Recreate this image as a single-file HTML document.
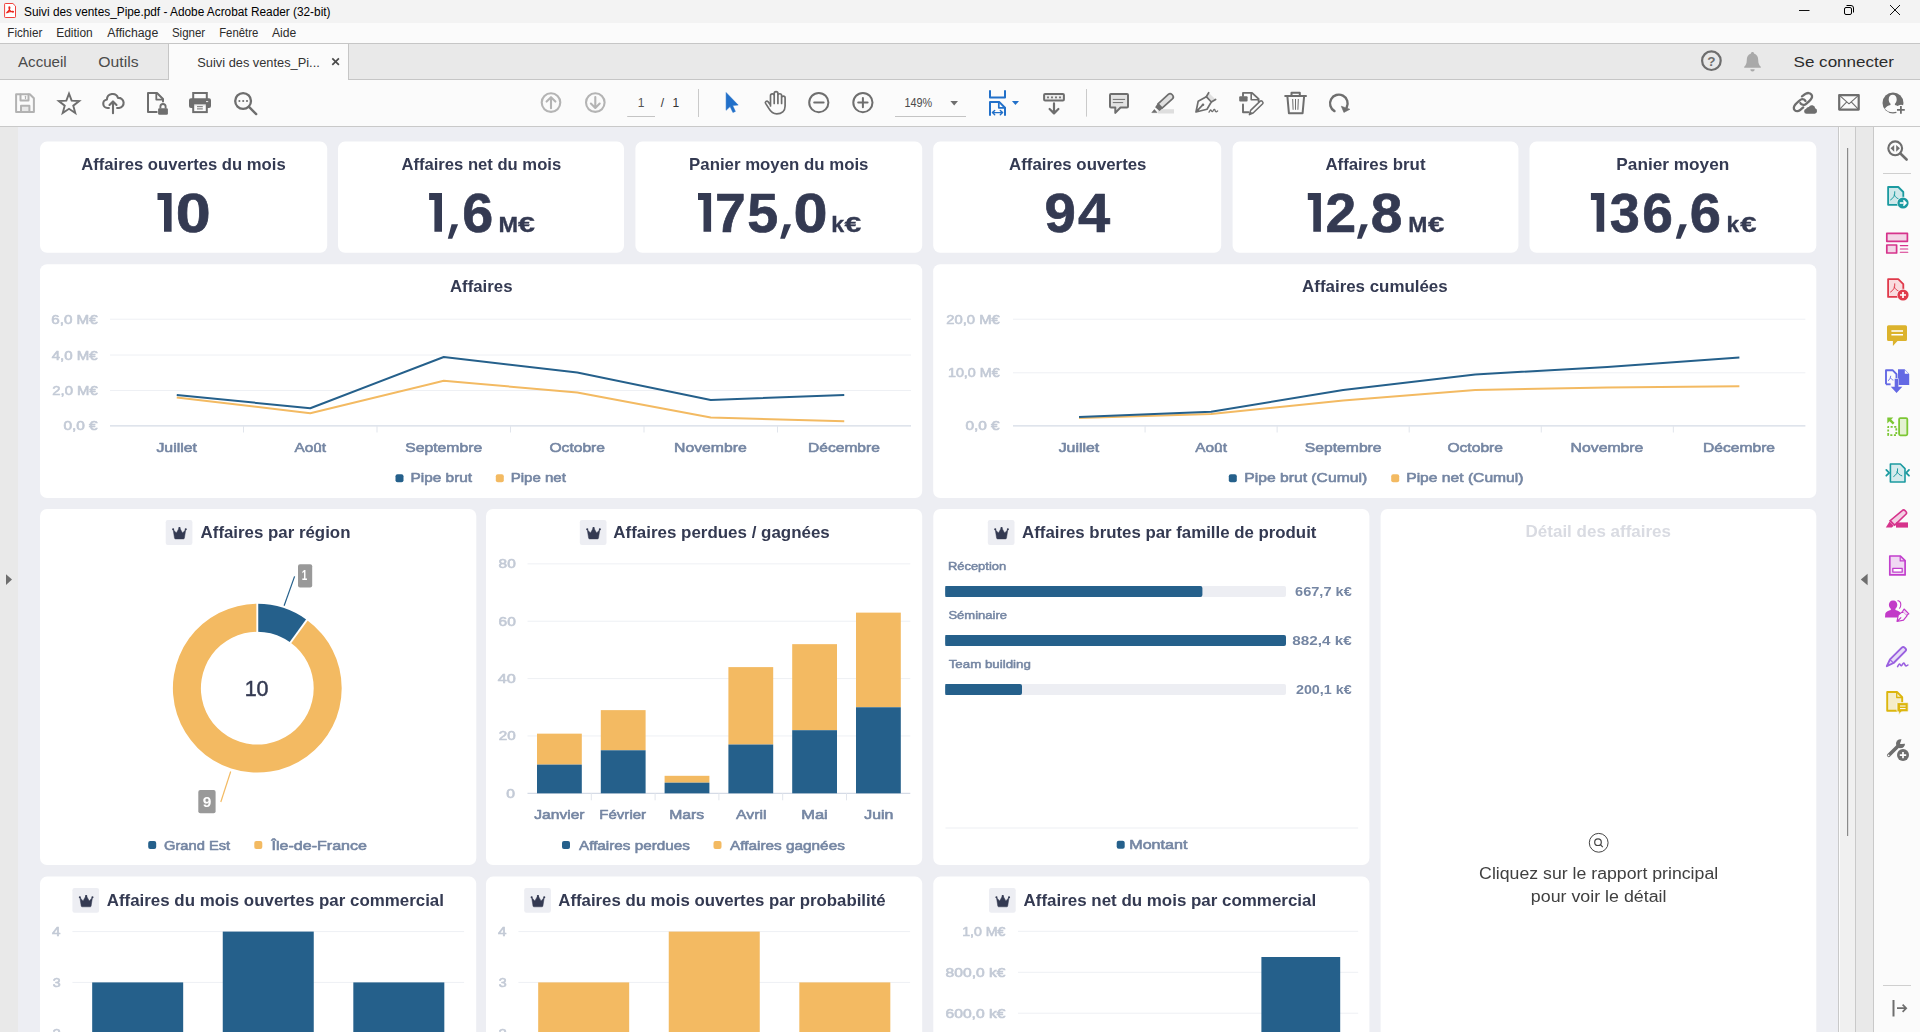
<!DOCTYPE html>
<html lang="fr"><head><meta charset="utf-8"><title>Suivi des ventes_Pipe.pdf - Adobe Acrobat Reader (32-bit)</title>
<style>
html,body{margin:0;padding:0;background:#fafafa;}
body{width:1920px;height:1032px;overflow:hidden;font-family:'Liberation Sans', sans-serif;}
svg{display:block;position:absolute;left:0;top:0;}
svg text{font-family:"Liberation Sans",sans-serif;white-space:pre;}
</style></head><body>
<svg id="chrome" width="1920" height="1032" viewBox="0 0 1920 1032">
<rect x="0.00" y="127.00" width="1920.00" height="905.00" fill="#edeef3"/>
<rect x="0.00" y="0.00" width="1920.00" height="23.00" fill="#f3f3f3"/>
<rect x="0.00" y="23.00" width="1920.00" height="20.00" fill="#fbfbfb"/>
<rect x="0.00" y="43.00" width="1920.00" height="37.00" fill="#e9e9e9"/>
<line x1="0.00" y1="43.50" x2="1920.00" y2="43.50" stroke="#c6c6c6" stroke-width="1"/>
<line x1="0.00" y1="79.50" x2="1920.00" y2="79.50" stroke="#c6c6c6" stroke-width="1"/>
<rect x="169.00" y="44.00" width="179.00" height="36.00" fill="#fbfbfb"/>
<line x1="168.50" y1="44.00" x2="168.50" y2="80.00" stroke="#c6c6c6" stroke-width="1"/>
<line x1="348.50" y1="44.00" x2="348.50" y2="80.00" stroke="#c6c6c6" stroke-width="1"/>
<rect x="0.00" y="80.00" width="1920.00" height="46.00" fill="#fbfbfb"/>
<line x1="0.00" y1="126.50" x2="1920.00" y2="126.50" stroke="#c9c9c9" stroke-width="1"/>
<g fill="none" stroke="#f0403a" stroke-width="1"><path d="M5.300 3.500h7.600l2.600 2.600v10.700a.7.7 0 0 1-.7.700h-9.500a.7.7 0 0 1-.7-.700v-12.600a.7.7 0 0 1 .7-.700z" fill="#fff"/><path d="M6.300 12.900c1.900-.9 3.300-3 3.600-5.300.1-1-1-1-1 0 0 1.900 1.700 4 3.900 4.500 1 .2 1-.9 0-.8-2.100.2-4.500.8-6.500 1.600z" stroke="#e8281f" stroke-width="1.100"/></g>
<text x="24.00" y="15.60" font-size="12" fill="#000" font-weight="normal" text-anchor="start" textLength="306.50" lengthAdjust="spacingAndGlyphs">Suivi des ventes_Pipe.pdf - Adobe Acrobat Reader (32-bit)</text>
<line x1="1799.00" y1="10.50" x2="1809.50" y2="10.50" stroke="#111" stroke-width="1"/>
<g fill="none" stroke="#000" stroke-width="1"><rect x="1844.500" y="7.500" width="7" height="7" rx="1.500"/><path d="M1846.500 5.500h4.500a2.500 2.500 0 0 1 2.500 2.500v4.500"/></g>
<path d="M1890 5l10 10M1900 5l-10 10" stroke="#111" stroke-width="1" fill="none"/>
<text x="7.30" y="37.00" font-size="12" fill="#2c2c2c" font-weight="normal" text-anchor="start" textLength="35.00" lengthAdjust="spacingAndGlyphs">Fichier</text>
<text x="56.20" y="37.00" font-size="12" fill="#2c2c2c" font-weight="normal" text-anchor="start" textLength="36.50" lengthAdjust="spacingAndGlyphs">Edition</text>
<text x="107.30" y="37.00" font-size="12" fill="#2c2c2c" font-weight="normal" text-anchor="start" textLength="51.00" lengthAdjust="spacingAndGlyphs">Affichage</text>
<text x="171.90" y="37.00" font-size="12" fill="#2c2c2c" font-weight="normal" text-anchor="start" textLength="33.30" lengthAdjust="spacingAndGlyphs">Signer</text>
<text x="219.20" y="37.00" font-size="12" fill="#2c2c2c" font-weight="normal" text-anchor="start" textLength="39.10" lengthAdjust="spacingAndGlyphs">Fenêtre</text>
<text x="271.90" y="37.00" font-size="12" fill="#2c2c2c" font-weight="normal" text-anchor="start" textLength="24.30" lengthAdjust="spacingAndGlyphs">Aide</text>
<text x="18.00" y="66.70" font-size="15" fill="#4b4b4b" font-weight="normal" text-anchor="start" textLength="48.70" lengthAdjust="spacingAndGlyphs">Accueil</text>
<text x="98.30" y="66.70" font-size="15" fill="#4b4b4b" font-weight="normal" text-anchor="start" textLength="40.20" lengthAdjust="spacingAndGlyphs">Outils</text>
<text x="197.30" y="67.00" font-size="13.5" fill="#333" font-weight="normal" text-anchor="start" textLength="122.50" lengthAdjust="spacingAndGlyphs">Suivi des ventes_Pi...</text>
<path d="M332.300 58.300l6.600 6.600M338.900 58.300l-6.600 6.600" stroke="#4b4b4b" stroke-width="1.700" fill="none"/>
<circle cx="1711.4" cy="60.7" r="9.300" fill="none" stroke="#6e6e6e" stroke-width="2.200"/>
<text x="1711.40" y="65.60" font-size="13.5" fill="#6e6e6e" font-weight="bold" text-anchor="middle">?</text>
<path d="M1752.500 52c-.9 0-1.500.6-1.500 1.400-3 .9-4.200 3.400-4.200 6.600 0 3.600-1.200 5.400-2.600 6.800v1h16.600v-1c-1.400-1.400-2.600-3.200-2.600-6.800 0-3.200-1.200-5.700-4.200-6.600 0-.8-.6-1.400-1.500-1.400zM1750.300 69.200a2.200 2.200 0 0 0 4.400 0z" fill="#a9a9a9"/>
<text x="1793.50" y="66.60" font-size="15" fill="#2c2c2c" font-weight="normal" text-anchor="start" textLength="100.50" lengthAdjust="spacingAndGlyphs">Se connecter</text>
<g fill="none" stroke="#b2b2b2" stroke-width="2" stroke-linejoin="round" stroke-linecap="round" stroke-linejoin="miter"><path d="M16.100 94.200h13.700l4.100 4.100v13.600h-17.800z"/><path d="M20.500 94.500v5.900h8v-5.900" /><path d="M25.500 96.300v2.300" stroke-width="1.200"/><rect x="21" y="105.700" width="8.400" height="6.200" fill="#e8e8e8"/></g>
<polygon points="69.00,93.60 71.65,100.66 79.18,100.99 73.28,105.69 75.29,112.96 69.00,108.80 62.71,112.96 64.72,105.69 58.82,100.99 66.35,100.66" fill="none" stroke="#6e6e6e" stroke-width="1.900" stroke-linejoin="miter"/>
<g fill="none" stroke="#6e6e6e" stroke-width="2.1" stroke-linejoin="round" stroke-linecap="round"><path d="M108.900 108h-1.400a4.300 4.300 0 0 1-.6-8.550 5.700 5.700 0 0 1 11.100-1.550 4.800 4.800 0 0 1 1.100 10.100h-2"/><path d="M113 113.300v-11.500M109.500 105l3.500-3.600 3.500 3.600"/></g>
<g fill="none" stroke="#6e6e6e" stroke-width="2" stroke-linejoin="round" stroke-linecap="round" stroke-linejoin="miter" stroke-linecap="butt"><path d="M156.700 112h-8.700v-19h9l6 6v2.600"/><path d="M156.300 93.300v6.300h6.300" stroke-width="1.800"/></g>
<rect x="158.100" y="108.300" width="9.800" height="6.500" rx="1.300" fill="#6e6e6e"/><path d="M160.400 108.500v-1.900a2.600 2.600 0 0 1 5.200 0v1.900" fill="none" stroke="#6e6e6e" stroke-width="1.900"/>
<path d="M193.200 99v-6h13.600v6" fill="none" stroke="#6e6e6e" stroke-width="2"/><rect x="189" y="98.200" width="22" height="9.800" rx="2" fill="#6e6e6e"/><rect x="206" y="101" width="2.200" height="1.100" fill="#e0e0e0"/><rect x="193.200" y="104.100" width="13.600" height="8" fill="#fbfbfb" stroke="#6e6e6e" stroke-width="2"/><path d="M197 106.700h5.800M197 108.900h5.800" stroke="#6e6e6e" stroke-width="1" fill="none"/><path d="M194.200 104.600h11.600" stroke="#ddd" stroke-width=".8"/>
<g fill="none" stroke="#6e6e6e" stroke-width="2.3" stroke-linejoin="round" stroke-linecap="round"><circle cx="243.100" cy="101" r="7.900"/><path d="M249 106.900l7.200 7.200" stroke-width="2.400"/></g>
<g fill="#6e6e6e" stroke="none" stroke-width="1.8" stroke-linejoin="round" stroke-linecap="round"><circle cx="239.400" cy="101" r="1.050"/><circle cx="243.200" cy="101" r="1.050"/><circle cx="247" cy="101" r="1.050"/></g>
<g fill="none" stroke="#b4b4b4" stroke-width="2.1" stroke-linejoin="round" stroke-linecap="round"><circle cx="551" cy="102.600" r="9.300"/><path d="M551 108.200v-10.800M546.600 101.600l4.400-4.400 4.400 4.400"/></g>
<g fill="none" stroke="#b4b4b4" stroke-width="2.1" stroke-linejoin="round" stroke-linecap="round"><circle cx="595.300" cy="102.600" r="9.300"/><path d="M595.300 97v10.800M590.900 103.600l4.400 4.400 4.400-4.400"/></g>
<text x="641.20" y="107.00" font-size="12" fill="#555" font-weight="normal" text-anchor="middle">1</text>
<line x1="627.20" y1="116.50" x2="655.00" y2="116.50" stroke="#c4c4c4" stroke-width="1"/>
<text x="660.70" y="107.00" font-size="12" fill="#333" font-weight="normal" text-anchor="start">/</text>
<text x="672.50" y="107.00" font-size="12" fill="#333" font-weight="normal" text-anchor="start">1</text>
<line x1="698.50" y1="89.00" x2="698.50" y2="117.00" stroke="#cacaca" stroke-width="1"/>
<path d="M726.100 92.500v17.800l4-3.700 2.800 5.900 2.500-1.100-2.700-5.900 5.500-.4z" fill="#2270c9" stroke="#2270c9" stroke-width=".5" stroke-linejoin="round"/>
<g fill="none" stroke="#6e6e6e" stroke-width="1.7" stroke-linejoin="round" stroke-linecap="round"><path d="M770.500 106v-10.300a1.850 1.850 0 0 1 3.700 0v7.800M774.200 95.800v-2.300a1.850 1.850 0 0 1 3.700 0v10M777.900 95.600a1.850 1.850 0 0 1 3.700 0v7.900M781.600 97.900a1.750 1.750 0 0 1 3.500 0v8.100c0 4.900-3.400 7.900-8.300 7.900-4 0-6-2-8-5.500l-3.200-5c-1-1.700 1.300-3.100 2.500-1.700l2.400 3.300"/></g>
<g fill="none" stroke="#6e6e6e" stroke-width="2" stroke-linejoin="round" stroke-linecap="round" stroke-linecap="butt"><circle cx="818.800" cy="102.600" r="9.600"/><path d="M814.200 102.600h9.400"/></g>
<g fill="none" stroke="#6e6e6e" stroke-width="2" stroke-linejoin="round" stroke-linecap="round" stroke-linecap="butt"><circle cx="862.900" cy="102.600" r="9.600"/><path d="M858.200 102.600h9.400M862.900 97.900v9.400"/></g>
<text x="904.50" y="107.00" font-size="12" fill="#4a4a4a" font-weight="normal" text-anchor="start" textLength="27.70" lengthAdjust="spacingAndGlyphs">149%</text>
<path d="M950.400 100.900h7.600l-3.800 4.600z" fill="#6e6e6e"/>
<line x1="895.00" y1="116.50" x2="966.00" y2="116.50" stroke="#c4c4c4" stroke-width="1"/>
<g fill="none" stroke="#2270c9" stroke-width="2" stroke-linejoin="round" stroke-linecap="round" stroke-linecap="butt" stroke-linejoin="miter"><path d="M990 91v6.500h15v-6.500"/><path d="M990 115v-12.900h9.400l5.600 5.600v7.300"/><path d="M998.800 102.300v5.500h5.900" stroke-width="1.700"/><path d="M992.600 112.600h9.800M994.700 110.400l-2.300 2.200 2.300 2.200M1000.300 110.400l2.300 2.200-2.300 2.200" stroke-width="1.400"/></g>
<path d="M1011.900 100.900h7.100l-3.550 4.200z" fill="#2270c9"/>
<g fill="none" stroke="#6e6e6e" stroke-width="2" stroke-linejoin="round" stroke-linecap="round"><rect x="1044.100" y="94" width="19.800" height="6.600" rx="1" fill="#ececec"/><path d="M1054 103.400v9.800M1049.600 109l4.400 4.400 4.400-4.400" stroke-width="2.200"/></g>
<g fill="#6e6e6e" stroke="none" stroke-width="1.8" stroke-linejoin="round" stroke-linecap="round"><rect x="1047.100" y="96.500" width="1.800" height="1.800"/><rect x="1051.100" y="96.500" width="1.800" height="1.800"/><rect x="1055.100" y="96.500" width="1.800" height="1.800"/><rect x="1059.100" y="96.500" width="1.800" height="1.800"/></g>
<line x1="1086.50" y1="89.00" x2="1086.50" y2="116.60" stroke="#cacaca" stroke-width="1"/>
<g fill="none" stroke="#6e6e6e" stroke-width="2" stroke-linejoin="round" stroke-linecap="round"><path d="M1111 94h16a1 1 0 0 1 1 1v11.500a1 1 0 0 1-1 1h-6.500l-5.200 5.400v-5.400h-4.300a1 1 0 0 1-1-1v-11.500a1 1 0 0 1 1-1z" fill="#e3e3e3"/><path d="M1113.200 99.400h11.500M1113.200 102.600h9.600" stroke-width="1"/></g>
<rect x="1157.80" y="109.20" width="16.20" height="4.30" fill="#dedede"/>
<path d="M1158 103.800l10.300-9.500a2.700 2.700 0 0 1 3.700.2l.6.700a2.700 2.700 0 0 1-.2 3.700l-10.300 9.300z" fill="#e0e0e0" stroke="#6e6e6e" stroke-width="1.700" stroke-linejoin="round"/><path d="M1157.700 103.500l4.700 5.100-2.800 2.300-4.500-3.600z" fill="#6e6e6e"/><path d="M1154.400 109.500l2.600 3.100h-5.200z" fill="#6e6e6e" stroke="#6e6e6e" stroke-width=".6" stroke-linejoin="round"/>
<path d="M1206.300 96.700l2.400-4 6.900 6.800-4.200 2.500z" fill="#e0e0e0"/>
<g fill="none" stroke="#6e6e6e" stroke-width="1.7" stroke-linejoin="round" stroke-linecap="round"><path d="M1196 112l2.200-10.800 8.100-4.500 5 5.300-4.300 7.200zM1196.300 111.700l6-6.300"/><path d="M1206.300 96.700l2.400-4M1211.300 102l4.300-2.600" /></g>
<circle cx="1203" cy="104.700" r="1.300" fill="#6e6e6e"/>
<g fill="none" stroke="#6e6e6e" stroke-width="1.8" stroke-linejoin="round" stroke-linecap="round"><path d="M1209 112.200c1.100-1.900 1.600-3 2.400-1.500s1.200 1.200 2-.4 1.400-.9 1.800.5 1.200 1.300 2.400.2" stroke-width="1.300"/></g>
<g fill="none" stroke="#6e6e6e" stroke-width="1.9" stroke-linejoin="round" stroke-linecap="round" stroke-linecap="butt" stroke-linejoin="miter"><path d="M1243 96v-3.100h9l6.600 6v2.300"/><path d="M1251.200 93.400v6.300h6.600" stroke-width="1.600"/><path d="M1243 104.400v7.900h5.600"/></g>
<rect x="1239.200" y="96.300" width="8.400" height="5.300" rx="1" fill="#6e6e6e"/>
<path d="M1249.400 114.600l1.200-4.200 9.600-9.300a1.200 1.200 0 0 1 1.700 0l.8.900a1.200 1.200 0 0 1 0 1.700l-9.600 9.300z" fill="#fbfbfb" stroke="#6e6e6e" stroke-width="1.500" stroke-linejoin="round"/><path d="M1249.400 114.600l1-3.400 2.400 2.400z" fill="#6e6e6e"/>
<g fill="none" stroke="#6e6e6e" stroke-width="2" stroke-linejoin="round" stroke-linecap="round" stroke-linecap="butt" stroke-linejoin="miter"><path d="M1285.200 96h20.800"/><path d="M1291.500 95.500v-2.800h8.300v2.800"/><path d="M1287.400 96.500l1.500 16.700h13.700l1.500-16.700"/></g>
<g fill="none" stroke="#6e6e6e" stroke-width="1" stroke-linejoin="round" stroke-linecap="round"><path d="M1292.700 99.400l.4 10M1295.500 99.400v10M1298.300 99.400l-.4 10"/></g>
<g fill="none" stroke="#6e6e6e" stroke-width="2.4" stroke-linejoin="round" stroke-linecap="round" stroke-linecap="butt"><path d="M1334.500 111.100a8.800 8.800 0 1 1 12.200-3.700"/></g>
<path d="M1341.300 106.200l8.600 3.100-6 3.100z" fill="#6e6e6e" stroke="#6e6e6e" stroke-width=".6" stroke-linejoin="round"/>
<path d="M1801.98 96.41C1802.59 95.98 1804.53 94.40 1805.64 93.83C1806.75 93.27 1807.67 92.91 1808.62 93.02C1809.57 93.13 1810.77 93.86 1811.34 94.51C1811.90 95.17 1812.15 96.10 1812.02 96.96C1811.88 97.81 1811.36 98.63 1810.52 99.67C1809.69 100.71 1808.04 102.31 1807.00 103.20C1805.96 104.08 1805.19 104.78 1804.28 104.96C1803.38 105.14 1802.22 104.60 1801.57 104.28C1800.91 103.97 1800.55 103.26 1800.35 103.06" fill="none" stroke="#6e6e6e" stroke-width="2.300" stroke-linecap="round"/><path d="M1805.50 101.03C1805.25 100.78 1804.67 99.83 1804.01 99.53C1803.36 99.24 1802.43 99.01 1801.57 99.26C1800.71 99.51 1799.90 100.14 1798.85 101.03C1797.81 101.91 1796.16 103.47 1795.33 104.55C1794.49 105.64 1793.92 106.59 1793.83 107.54C1793.74 108.49 1794.17 109.64 1794.78 110.25C1795.39 110.86 1796.59 111.25 1797.50 111.20C1798.40 111.16 1799.26 110.61 1800.21 109.98C1801.16 109.35 1802.70 107.83 1803.20 107.40" fill="none" stroke="#6e6e6e" stroke-width="2.300" stroke-linecap="round"/>
<path d="M1806.500 113.700a2.500 2.500 0 0 1-.4-4.950 2.800 2.800 0 0 1 2.700-1.750 3.400 3.400 0 0 1 6.400 1.300 2.800 2.800 0 0 1-.5 5.400z" fill="#6e6e6e"/>
<g fill="none" stroke="#6e6e6e" stroke-width="2.2" stroke-linejoin="round" stroke-linecap="round" stroke-linejoin="miter"><rect x="1839.200" y="95.100" width="19.500" height="14.500"/><path d="M1839.500 95.400l9.500 8.400 9.500-8.400M1839.500 109.300l6.800-7M1858.500 109.300l-6.800-7" stroke-width="1.100"/></g>
<circle cx="1893" cy="102.900" r="10.500" fill="#6e6e6e"/><path d="M1892.700 94.800c2.400 0 4 2 4 4.700 0 1.800-.8 3.300-1.800 4.200v1.300c2.300.7 4.600 1.700 5.700 3.700a10.500 10.500 0 0 1-15.800 0c1.100-2 3.400-3 5.700-3.700v-1.300c-1-.9-1.800-2.400-1.800-4.200 0-2.700 1.600-4.700 4-4.700z" fill="#fbfbfb"/>
<circle cx="1901" cy="110" r="5.200" fill="#fbfbfb"/>
<path d="M1897 109.800h7.800M1900.900 105.900v7.800" stroke="#6e6e6e" stroke-width="1.800" fill="none"/>
<rect x="0.00" y="127.00" width="18.00" height="905.00" fill="#e9e9e9"/>
<path d="M6 574.200v10.800l6-5.400z" fill="#6e6e6e"/>
<rect x="1838.00" y="127.00" width="1.00" height="905.00" fill="#c9c9c9"/>
<rect x="1839.00" y="127.00" width="1.00" height="905.00" fill="#fcfcfc"/>
<rect x="1840.00" y="127.00" width="15.00" height="905.00" fill="#f0f0f0"/>
<rect x="1847.00" y="148.00" width="1.20" height="688.00" fill="#8a8a8a"/>
<rect x="1855.00" y="127.00" width="1.00" height="905.00" fill="#c9c9c9"/>
<rect x="1856.00" y="127.00" width="17.00" height="905.00" fill="#e9e9e9"/>
<rect x="1873.00" y="127.00" width="1.00" height="905.00" fill="#c9c9c9"/>
<rect x="1874.00" y="127.00" width="46.00" height="905.00" fill="#fbfbfb"/>
<path d="M1867.600 573.800v11.400l-6.800-5.700z" fill="#6e6e6e"/>
<line x1="1883.00" y1="173.50" x2="1911.00" y2="173.50" stroke="#cfcfcf" stroke-width="1"/>
<line x1="1883.00" y1="985.50" x2="1911.00" y2="985.50" stroke="#cfcfcf" stroke-width="1"/>
<g fill="none" stroke="#6e6e6e" stroke-width="2.1" stroke-linejoin="round" stroke-linecap="round"><circle cx="1895.200" cy="148.300" r="6.900"/><path d="M1900.400 153.500l6.200 6" stroke-width="2.600"/></g>
<path d="M1894.200 144.900v6.800l-3.700-3.400zM1896.200 144.900v6.800l3.700-3.400z" fill="#6e6e6e"/>
<g fill="none" stroke="#1b9aa0" stroke-width="1.8" stroke-linejoin="round" stroke-linecap="round"><path d="M1888.1 187h10.2l5 5v12.8h-15.2z" fill="#cfe8ea"/></g>
<path d="M1894.78 191.70c.4 3.600-1.400 6.600-4.200 8.200M1894.28 194.90c1 2.200 2.800 3.700 5 4.300" fill="none" stroke="#1b9aa0" stroke-width="1" stroke-linecap="round"/>
<circle cx="1903" cy="203" r="6.200" fill="#fafafa"/><circle cx="1903" cy="203" r="5.600" fill="#1b9aa0"/><path d="M1899.800 203h5.800M1903.400 200.400l2.600 2.600-2.600 2.600" fill="none" stroke="#fff" stroke-width="1.500"/>
<g fill="none" stroke="#d6338c" stroke-width="1.7" stroke-linejoin="round" stroke-linecap="round"><rect x="1886.800" y="233.300" width="20.600" height="8" fill="#f3d6e7"/><rect x="1886.800" y="245" width="9.800" height="8" fill="#f3d6e7"/><path d="M1900.300 245.600h7.500M1900.300 249h7.500M1900.300 252.300h7.500" stroke-width="1.100"/></g>
<g fill="none" stroke="#e03a4b" stroke-width="1.8" stroke-linejoin="round" stroke-linecap="round"><path d="M1888.1 279.1h10.2l5 5v12.8h-15.2z" fill="#f9dcdf"/></g>
<path d="M1894.78 283.80c.4 3.600-1.400 6.600-4.200 8.200M1894.28 287.00c1 2.200 2.800 3.700 5 4.300" fill="none" stroke="#e03a4b" stroke-width="1" stroke-linecap="round"/>
<circle cx="1903" cy="295" r="6.200" fill="#fafafa"/><circle cx="1903" cy="295" r="5.600" fill="#e03a4b"/><path d="M1900 295h6M1903 292v6" fill="none" stroke="#fff" stroke-width="1.700"/>
<path d="M1888.500 325.200h17a1.500 1.500 0 0 1 1.500 1.500v12.800a1.500 1.500 0 0 1-1.500 1.500h-8l-4.600 5v-5h-4.400a1.500 1.500 0 0 1-1.500-1.500v-12.800a1.500 1.500 0 0 1 1.500-1.500z" fill="#dcb32c"/><path d="M1891.400 331h11.600M1891.400 334.800h11.600" stroke="#fff" stroke-width="1.600" fill="none"/>
<path d="M1886 384.300v-14.100h6.600l3.900 3.900v4.500" fill="none" stroke="#6469e4" stroke-width="1.900" stroke-linejoin="round"/><path d="M1886 384.300h4.600" fill="none" stroke="#6469e4" stroke-width="1.900"/>
<path d="M1888.300 380.600c1.300-.9 2.200-2.500 2.400-4.400M1890.500 377.800c.5 1.100 1.400 1.900 2.500 2.200" fill="none" stroke="#6469e4" stroke-width=".9" stroke-linecap="round"/>
<path d="M1898 369.300h6.600l4.600 4.600v11.100h-11.200z" fill="#6469e4"/><path d="M1904.800 369.900v3.800h3.800z" fill="#fafafa"/>
<path d="M1894.700 378.800h3.700v7.900h3.900l-5.750 6.300-5.750-6.300h3.900z" fill="#6469e4" stroke="#fafafa" stroke-width=".9" paint-order="stroke"/>
<g fill="none" stroke="#7cc734" stroke-width="1.8" stroke-linejoin="round" stroke-linecap="round"><rect x="1899.100" y="418.100" width="8.200" height="17.200" rx="1.200" fill="#e4f1d2"/></g>
<g fill="none" stroke="#7cc734" stroke-width="1.8" stroke-linejoin="round" stroke-linecap="round"><path d="M1888.200 435.200v-8.400h8.100v8.400z" stroke-dasharray="2.100 1.500" stroke-linecap="butt"/></g>
<path d="M1887.300 417.400h6l-2.100 2.100 3.300 3.300-1.700 1.700-3.300-3.300-2.200 2.200z" fill="#7cc734"/>
<g fill="none" stroke="#1b9aa0" stroke-width="1.6" stroke-linejoin="round" stroke-linecap="round"><path d="M1890.400 464h10l4.600 4.600v13.400h-14.600z" fill="#d5ebed"/><path d="M1886.300 469.900l2.900 2.900-2.900 2.900M1909 469.900l-2.900 2.900 2.900 2.900" stroke-width="1.800"/></g>
<path d="M1897.600 468.800c.4 3.400-1.300 6.200-3.900 7.700M1897.100 471.800c.9 2 2.600 3.400 4.700 4" fill="none" stroke="#1b9aa0" stroke-width="1" stroke-linecap="round"/>
<path d="M1902.200 510.600a2 2 0 0 1 2.800 0l.9.900a2 2 0 0 1 0 2.800l-11.200 10.800-4.600-4.400z" fill="#f3d0e4" stroke="#d6338c" stroke-width="1.600"/><path d="M1889.600 521.600l4.200 4.200-2 1.800h-6z" fill="#d6338c"/><rect x="1896" y="522.400" width="12" height="5.200" fill="#d6338c"/>
<g fill="none" stroke="#c23fcd" stroke-width="1.7" stroke-linejoin="round" stroke-linecap="round"><path d="M1889.800 556h10.600l4.700 4.700v14.200h-15.300z" fill="#f0d8f3"/><path d="M1900.200 556.300v4.600h4.600" stroke-width="1.200"/><rect x="1892.800" y="568.300" width="9.400" height="3.800" fill="#fff" stroke-width="1.300"/></g>
<path d="M1893.400 600.400c2.300 0 3.900 1.900 3.900 4.400 0 1.700-.8 3.200-1.900 4v1.100c2.300.6 4.700 1.500 5.500 3.600l.3 4.100h-16.200l.3-4.100c.8-2.100 3.200-3 5.500-3.600v-1.100c-1.100-.8-1.900-2.300-1.900-4 0-2.500 1.600-4.400 3.900-4.400z" fill="#c23ac8"/>
<path d="M1897.500 600.600c2 .2 3.300 2 3.300 4.200 0 1.600-.6 2.900-1.500 3.800" fill="none" stroke="#c23ac8" stroke-width="1.100"/>
<path d="M1897 621.500l1.300-6.500 4.600-3.600 4.200 4.200-3.600 4.600zM1897 621.500l4.200-4.200" fill="#fafafa" stroke="#c23ac8" stroke-width="1.200" stroke-linejoin="round"/><path d="M1902.500 611.600l1.600-2.600 4.800 4.800-2.600 1.600" fill="#f0d8f3" stroke="#c23ac8" stroke-width="1.100" stroke-linejoin="round"/>
<path d="M1901.800 647.600a2 2 0 0 1 2.800 0l.8.800a2 2 0 0 1 0 2.800l-11.800 11.800-6.800 3.200 3.200-6.800z" fill="#e6dcf6" stroke="#9a60e0" stroke-width="1.900" stroke-linejoin="round"/><path d="M1890.300 659.800l3 3" stroke="#9a60e0" stroke-width="1.200"/><path d="M1897.600 666.600c1.100-2.200 1.800-3.400 2.700-1.800s1.400 1.200 2.300-.6 1.700-1.200 2.300.4 1.500 1.700 3 .4" fill="none" stroke="#9a60e0" stroke-width="1.600" stroke-linecap="round"/>
<g fill="none" stroke="#dcb60e" stroke-width="1.9" stroke-linejoin="round" stroke-linecap="round"><path d="M1887.200 692h9.800l5.200 5.200v13.600h-15z" fill="#f5edc9"/><path d="M1896.700 692.300v5.200h5.200" stroke-width="1.300"/></g>
<path d="M1897.800 702.600h9.600a.8.8 0 0 1 .8.800v7.600a.8.8 0 0 1-.8.800h-6l-2.600 3v-3h-1a.8.8 0 0 1-.8-.8v-7.600a.8.8 0 0 1 .8-.8z" fill="#dcb60e" stroke="#fafafa" stroke-width=".8"/><path d="M1900 706h5.600M1900 708.600h5.600" stroke="#fff" stroke-width="1" fill="none"/>
<path d="M1888.800 755.200l9.600-9.400" stroke="#6e6e6e" stroke-width="3.700" stroke-linecap="round" fill="none"/><circle cx="1900.500" cy="743.700" r="4.500" fill="#6e6e6e"/><path d="M1900.700 743.500l1.700-4.800 4.600 4.200z" fill="#fbfbfb" stroke="#fbfbfb" stroke-width="1.200" stroke-linejoin="round"/>
<circle cx="1888.600" cy="755.300" r=".9" fill="#fbfbfb"/>
<circle cx="1903" cy="755.100" r="7" fill="#fafafa"/><circle cx="1903" cy="755.100" r="6" fill="#6e6e6e"/><path d="M1899.800 755.100h6.400M1903 751.900v6.400" stroke="#fff" stroke-width="1.700" fill="none"/>
<path d="M1893.500 1000v16.500" stroke="#6e6e6e" stroke-width="2" fill="none"/><path d="M1897 1008.200h9M1902.600 1004.600l3.600 3.600-3.600 3.600" stroke="#6e6e6e" stroke-width="1.700" fill="none"/>
</svg>
<svg id="doc" width="1920" height="1032" viewBox="0 0 1920 1032" style="will-change:transform">
<rect x="40.00" y="141.60" width="287.20" height="111.20" fill="#fff" rx="7"/>
<text x="81.20" y="169.60" font-size="16.3" fill="#343a52" font-weight="bold" text-anchor="start" textLength="204.47" lengthAdjust="spacingAndGlyphs">Affaires ouvertes du mois</text>
<g>
<path d="M157.50 193.100H171.60V231.800H164.00V200.100H157.50Z" fill="#343a52"/>
<text x="175.65" y="231.80" font-size="56.3" fill="#343a52" font-weight="bold" text-anchor="start" textLength="34.98" lengthAdjust="spacingAndGlyphs" stroke="#343a52" stroke-width=".7" stroke-linejoin="round">0</text>
</g>
<rect x="338.00" y="141.60" width="286.00" height="111.20" fill="#fff" rx="7"/>
<text x="401.40" y="169.60" font-size="16.3" fill="#343a52" font-weight="bold" text-anchor="start" textLength="159.76" lengthAdjust="spacingAndGlyphs">Affaires net du mois</text>
<g>
<path d="M429.10 193.100H442.00V231.800H434.40V200.100H429.10Z" fill="#343a52"/>
<path d="M451.56 224.2H458.10L452.23 238.750H447.80Z" fill="#343a52"/>
<text x="462.20" y="231.80" font-size="56.3" fill="#343a52" font-weight="bold" text-anchor="start" textLength="30.96" lengthAdjust="spacingAndGlyphs" stroke="#343a52" stroke-width=".7" stroke-linejoin="round">6</text>
<text x="498.55" y="231.80" font-size="21.2" fill="#343a52" font-weight="bold" text-anchor="start" textLength="19.61" lengthAdjust="spacingAndGlyphs" stroke="#343a52" stroke-width=".3">M</text>
<text x="517.98" y="231.80" font-size="21.2" fill="#343a52" font-weight="bold" text-anchor="start" textLength="16.94" lengthAdjust="spacingAndGlyphs" stroke="#343a52" stroke-width=".3">€</text>
</g>
<rect x="635.40" y="141.60" width="286.80" height="111.20" fill="#fff" rx="7"/>
<text x="689.09" y="169.60" font-size="16.3" fill="#343a52" font-weight="bold" text-anchor="start" textLength="179.39" lengthAdjust="spacingAndGlyphs">Panier moyen du mois</text>
<g>
<path d="M698.00 193.100H711.10V231.800H703.50V200.100H698.00Z" fill="#343a52"/>
<text x="714.88" y="231.80" font-size="56.3" fill="#343a52" font-weight="bold" text-anchor="start" textLength="30.70" lengthAdjust="spacingAndGlyphs" stroke="#343a52" stroke-width=".7" stroke-linejoin="round">7</text>
<text x="747.23" y="231.80" font-size="56.3" fill="#343a52" font-weight="bold" text-anchor="start" textLength="30.98" lengthAdjust="spacingAndGlyphs" stroke="#343a52" stroke-width=".7" stroke-linejoin="round">5</text>
<path d="M784.18 224.2H791.10L784.89 238.750H780.20Z" fill="#343a52"/>
<text x="793.41" y="231.80" font-size="56.3" fill="#343a52" font-weight="bold" text-anchor="start" textLength="34.05" lengthAdjust="spacingAndGlyphs" stroke="#343a52" stroke-width=".7" stroke-linejoin="round">0</text>
<text x="831.19" y="231.80" font-size="21.2" fill="#343a52" font-weight="bold" text-anchor="start" textLength="12.97" lengthAdjust="spacingAndGlyphs" stroke="#343a52" stroke-width=".3">k</text>
<text x="844.58" y="231.80" font-size="21.2" fill="#343a52" font-weight="bold" text-anchor="start" textLength="16.74" lengthAdjust="spacingAndGlyphs" stroke="#343a52" stroke-width=".3">€</text>
</g>
<rect x="933.20" y="141.60" width="288.00" height="111.20" fill="#fff" rx="7"/>
<text x="1009.10" y="169.60" font-size="16.3" fill="#343a52" font-weight="bold" text-anchor="start" textLength="137.38" lengthAdjust="spacingAndGlyphs">Affaires ouvertes</text>
<g>
<text x="1044.38" y="231.80" font-size="56.3" fill="#343a52" font-weight="bold" text-anchor="start" textLength="31.36" lengthAdjust="spacingAndGlyphs" stroke="#343a52" stroke-width=".7" stroke-linejoin="round">9</text>
<text x="1078.13" y="231.80" font-size="56.3" fill="#343a52" font-weight="bold" text-anchor="start" textLength="32.17" lengthAdjust="spacingAndGlyphs" stroke="#343a52" stroke-width=".7" stroke-linejoin="round">4</text>
</g>
<rect x="1232.60" y="141.60" width="285.80" height="111.20" fill="#fff" rx="7"/>
<text x="1325.40" y="169.60" font-size="16.3" fill="#343a52" font-weight="bold" text-anchor="start" textLength="100.11" lengthAdjust="spacingAndGlyphs">Affaires brut</text>
<g>
<path d="M1307.80 193.100H1320.90V231.800H1313.30V200.100H1307.80Z" fill="#343a52"/>
<text x="1325.43" y="231.80" font-size="56.3" fill="#343a52" font-weight="bold" text-anchor="start" textLength="30.63" lengthAdjust="spacingAndGlyphs" stroke="#343a52" stroke-width=".7" stroke-linejoin="round">2</text>
<path d="M1360.94 224.2H1367.80L1361.64 238.750H1357.00Z" fill="#343a52"/>
<text x="1370.83" y="231.80" font-size="56.3" fill="#343a52" font-weight="bold" text-anchor="start" textLength="31.68" lengthAdjust="spacingAndGlyphs" stroke="#343a52" stroke-width=".7" stroke-linejoin="round">8</text>
<text x="1408.28" y="231.80" font-size="21.2" fill="#343a52" font-weight="bold" text-anchor="start" textLength="19.13" lengthAdjust="spacingAndGlyphs" stroke="#343a52" stroke-width=".3">M</text>
<text x="1427.98" y="231.80" font-size="21.2" fill="#343a52" font-weight="bold" text-anchor="start" textLength="16.32" lengthAdjust="spacingAndGlyphs" stroke="#343a52" stroke-width=".3">€</text>
</g>
<rect x="1529.50" y="141.60" width="286.80" height="111.20" fill="#fff" rx="7"/>
<text x="1616.36" y="169.60" font-size="16.3" fill="#343a52" font-weight="bold" text-anchor="start" textLength="112.91" lengthAdjust="spacingAndGlyphs">Panier moyen</text>
<g>
<path d="M1590.90 193.100H1604.20V231.800H1596.60V200.100H1590.90Z" fill="#343a52"/>
<text x="1609.71" y="231.80" font-size="56.3" fill="#343a52" font-weight="bold" text-anchor="start" textLength="30.09" lengthAdjust="spacingAndGlyphs" stroke="#343a52" stroke-width=".7" stroke-linejoin="round">3</text>
<text x="1642.32" y="231.80" font-size="56.3" fill="#343a52" font-weight="bold" text-anchor="start" textLength="30.62" lengthAdjust="spacingAndGlyphs" stroke="#343a52" stroke-width=".7" stroke-linejoin="round">6</text>
<path d="M1679.85 224.2H1686.90L1680.57 238.750H1675.80Z" fill="#343a52"/>
<text x="1689.78" y="231.80" font-size="56.3" fill="#343a52" font-weight="bold" text-anchor="start" textLength="31.19" lengthAdjust="spacingAndGlyphs" stroke="#343a52" stroke-width=".7" stroke-linejoin="round">6</text>
<text x="1726.52" y="231.80" font-size="21.2" fill="#343a52" font-weight="bold" text-anchor="start" textLength="12.74" lengthAdjust="spacingAndGlyphs" stroke="#343a52" stroke-width=".3">k</text>
<text x="1740.18" y="231.80" font-size="21.2" fill="#343a52" font-weight="bold" text-anchor="start" textLength="16.32" lengthAdjust="spacingAndGlyphs" stroke="#343a52" stroke-width=".3">€</text>
</g>
<rect x="40.00" y="264.30" width="882.20" height="233.70" fill="#fff" rx="7"/>
<text x="449.95" y="292.00" font-size="16.3" fill="#343a52" font-weight="bold" text-anchor="start" textLength="62.57" lengthAdjust="spacingAndGlyphs">Affaires</text>
<line x1="110.00" y1="319.20" x2="911.00" y2="319.20" stroke="#eef0f4" stroke-width="1"/>
<text x="51.24" y="323.70" font-size="12.6" fill="#c3cad6" font-weight="normal" text-anchor="start" textLength="46.48" lengthAdjust="spacingAndGlyphs" stroke="#c3cad6" stroke-width="0.6" stroke-linejoin="round">6,0 M€</text>
<line x1="110.00" y1="355.00" x2="911.00" y2="355.00" stroke="#eef0f4" stroke-width="1"/>
<text x="51.67" y="359.50" font-size="12.6" fill="#c3cad6" font-weight="normal" text-anchor="start" textLength="46.04" lengthAdjust="spacingAndGlyphs" stroke="#c3cad6" stroke-width="0.6" stroke-linejoin="round">4,0 M€</text>
<line x1="110.00" y1="390.50" x2="911.00" y2="390.50" stroke="#eef0f4" stroke-width="1"/>
<text x="52.26" y="395.00" font-size="12.6" fill="#c3cad6" font-weight="normal" text-anchor="start" textLength="45.45" lengthAdjust="spacingAndGlyphs" stroke="#c3cad6" stroke-width="0.6" stroke-linejoin="round">2,0 M€</text>
<line x1="110.00" y1="425.80" x2="911.00" y2="425.80" stroke="#d5dbe6" stroke-width="1.2"/>
<text x="63.40" y="430.30" font-size="12.6" fill="#c3cad6" font-weight="normal" text-anchor="start" textLength="34.32" lengthAdjust="spacingAndGlyphs" stroke="#c3cad6" stroke-width="0.6" stroke-linejoin="round">0,0 €</text>
<line x1="243.50" y1="426.00" x2="243.50" y2="432.50" stroke="#e1e5ec" stroke-width="1"/>
<line x1="377.00" y1="426.00" x2="377.00" y2="432.50" stroke="#e1e5ec" stroke-width="1"/>
<line x1="510.50" y1="426.00" x2="510.50" y2="432.50" stroke="#e1e5ec" stroke-width="1"/>
<line x1="644.00" y1="426.00" x2="644.00" y2="432.50" stroke="#e1e5ec" stroke-width="1"/>
<line x1="777.50" y1="426.00" x2="777.50" y2="432.50" stroke="#e1e5ec" stroke-width="1"/>
<text x="156.41" y="451.80" font-size="13.2" fill="#7586a3" font-weight="normal" text-anchor="start" textLength="40.54" lengthAdjust="spacingAndGlyphs" stroke="#7586a3" stroke-width="0.6" stroke-linejoin="round">Juillet</text>
<text x="294.47" y="451.80" font-size="13.2" fill="#7586a3" font-weight="normal" text-anchor="start" textLength="31.64" lengthAdjust="spacingAndGlyphs" stroke="#7586a3" stroke-width="0.6" stroke-linejoin="round">Août</text>
<text x="405.29" y="451.80" font-size="13.2" fill="#7586a3" font-weight="normal" text-anchor="start" textLength="76.91" lengthAdjust="spacingAndGlyphs" stroke="#7586a3" stroke-width="0.6" stroke-linejoin="round">Septembre</text>
<text x="549.42" y="451.80" font-size="13.2" fill="#7586a3" font-weight="normal" text-anchor="start" textLength="55.63" lengthAdjust="spacingAndGlyphs" stroke="#7586a3" stroke-width="0.6" stroke-linejoin="round">Octobre</text>
<text x="674.06" y="451.80" font-size="13.2" fill="#7586a3" font-weight="normal" text-anchor="start" textLength="72.79" lengthAdjust="spacingAndGlyphs" stroke="#7586a3" stroke-width="0.6" stroke-linejoin="round">Novembre</text>
<text x="807.97" y="451.80" font-size="13.2" fill="#7586a3" font-weight="normal" text-anchor="start" textLength="71.96" lengthAdjust="spacingAndGlyphs" stroke="#7586a3" stroke-width="0.6" stroke-linejoin="round">Décembre</text>
<polyline points="176.75,397.50 310.25,413.20 443.75,380.80 577.25,392.50 710.75,417.50 844.25,421.20" fill="none" stroke="#f3ba62" stroke-width="2" stroke-linejoin="round"/>
<polyline points="176.75,395.00 310.25,408.20 443.75,357.00 577.25,372.50 710.75,400.00 844.25,395.00" fill="none" stroke="#25608b" stroke-width="2" stroke-linejoin="round"/>
<rect x="395.50" y="474.20" width="8.00" height="8.00" fill="#25608b" rx="2"/>
<text x="410.54" y="482.00" font-size="13.2" fill="#7586a3" font-weight="normal" text-anchor="start" textLength="61.56" lengthAdjust="spacingAndGlyphs" stroke="#7586a3" stroke-width="0.6" stroke-linejoin="round">Pipe brut</text>
<rect x="495.80" y="474.20" width="8.00" height="8.00" fill="#f3ba62" rx="2"/>
<text x="510.77" y="482.00" font-size="13.2" fill="#7586a3" font-weight="normal" text-anchor="start" textLength="55.13" lengthAdjust="spacingAndGlyphs" stroke="#7586a3" stroke-width="0.6" stroke-linejoin="round">Pipe net</text>
<rect x="933.20" y="264.30" width="883.10" height="233.70" fill="#fff" rx="7"/>
<text x="1302.09" y="292.00" font-size="16.3" fill="#343a52" font-weight="bold" text-anchor="start" textLength="145.58" lengthAdjust="spacingAndGlyphs">Affaires cumulées</text>
<line x1="1013.00" y1="319.20" x2="1805.40" y2="319.20" stroke="#eef0f4" stroke-width="1"/>
<text x="946.26" y="323.70" font-size="12.6" fill="#c3cad6" font-weight="normal" text-anchor="start" textLength="53.45" lengthAdjust="spacingAndGlyphs" stroke="#c3cad6" stroke-width="0.6" stroke-linejoin="round">20,0 M€</text>
<line x1="1013.00" y1="372.80" x2="1805.40" y2="372.80" stroke="#eef0f4" stroke-width="1"/>
<text x="947.91" y="377.30" font-size="12.6" fill="#c3cad6" font-weight="normal" text-anchor="start" textLength="51.79" lengthAdjust="spacingAndGlyphs" stroke="#c3cad6" stroke-width="0.6" stroke-linejoin="round">10,0 M€</text>
<line x1="1013.00" y1="425.80" x2="1805.40" y2="425.80" stroke="#d5dbe6" stroke-width="1.2"/>
<text x="965.40" y="430.30" font-size="12.6" fill="#c3cad6" font-weight="normal" text-anchor="start" textLength="34.32" lengthAdjust="spacingAndGlyphs" stroke="#c3cad6" stroke-width="0.6" stroke-linejoin="round">0,0 €</text>
<line x1="1145.07" y1="426.00" x2="1145.07" y2="432.50" stroke="#e1e5ec" stroke-width="1"/>
<line x1="1277.13" y1="426.00" x2="1277.13" y2="432.50" stroke="#e1e5ec" stroke-width="1"/>
<line x1="1409.20" y1="426.00" x2="1409.20" y2="432.50" stroke="#e1e5ec" stroke-width="1"/>
<line x1="1541.27" y1="426.00" x2="1541.27" y2="432.50" stroke="#e1e5ec" stroke-width="1"/>
<line x1="1673.33" y1="426.00" x2="1673.33" y2="432.50" stroke="#e1e5ec" stroke-width="1"/>
<text x="1058.70" y="451.80" font-size="13.2" fill="#7586a3" font-weight="normal" text-anchor="start" textLength="40.54" lengthAdjust="spacingAndGlyphs" stroke="#7586a3" stroke-width="0.6" stroke-linejoin="round">Juillet</text>
<text x="1195.32" y="451.80" font-size="13.2" fill="#7586a3" font-weight="normal" text-anchor="start" textLength="31.64" lengthAdjust="spacingAndGlyphs" stroke="#7586a3" stroke-width="0.6" stroke-linejoin="round">Août</text>
<text x="1304.71" y="451.80" font-size="13.2" fill="#7586a3" font-weight="normal" text-anchor="start" textLength="76.91" lengthAdjust="spacingAndGlyphs" stroke="#7586a3" stroke-width="0.6" stroke-linejoin="round">Septembre</text>
<text x="1447.40" y="451.80" font-size="13.2" fill="#7586a3" font-weight="normal" text-anchor="start" textLength="55.63" lengthAdjust="spacingAndGlyphs" stroke="#7586a3" stroke-width="0.6" stroke-linejoin="round">Octobre</text>
<text x="1570.61" y="451.80" font-size="13.2" fill="#7586a3" font-weight="normal" text-anchor="start" textLength="72.79" lengthAdjust="spacingAndGlyphs" stroke="#7586a3" stroke-width="0.6" stroke-linejoin="round">Novembre</text>
<text x="1703.09" y="451.80" font-size="13.2" fill="#7586a3" font-weight="normal" text-anchor="start" textLength="71.96" lengthAdjust="spacingAndGlyphs" stroke="#7586a3" stroke-width="0.6" stroke-linejoin="round">Décembre</text>
<polyline points="1079.03,418.00 1211.10,414.00 1343.17,400.50 1475.23,390.00 1607.30,387.50 1739.37,386.20" fill="none" stroke="#f3ba62" stroke-width="2" stroke-linejoin="round"/>
<polyline points="1079.03,417.00 1211.10,411.80 1343.17,390.00 1475.23,374.50 1607.30,367.00 1739.37,357.50" fill="none" stroke="#25608b" stroke-width="2" stroke-linejoin="round"/>
<rect x="1228.80" y="474.20" width="8.00" height="8.00" fill="#25608b" rx="2"/>
<text x="1244.21" y="482.00" font-size="13.2" fill="#7586a3" font-weight="normal" text-anchor="start" textLength="122.96" lengthAdjust="spacingAndGlyphs" stroke="#7586a3" stroke-width="0.6" stroke-linejoin="round">Pipe brut (Cumul)</text>
<rect x="1391.20" y="474.20" width="8.00" height="8.00" fill="#f3ba62" rx="2"/>
<text x="1406.22" y="482.00" font-size="13.2" fill="#7586a3" font-weight="normal" text-anchor="start" textLength="117.25" lengthAdjust="spacingAndGlyphs" stroke="#7586a3" stroke-width="0.6" stroke-linejoin="round">Pipe net (Cumul)</text>
<rect x="40.00" y="509.00" width="436.30" height="356.00" fill="#fff" rx="7"/>
<rect x="165.70" y="520.10" width="26.70" height="24.80" fill="#edeef3" rx="2.2"/>
<g transform="translate(172.00 527.00)" fill="#343a52"><path d="M7.450 .5l3.100 5.500 3.200-3.500-1.350 8.600a.9.9 0 0 1-.9.800h-8.100a.9.9 0 0 1-.9-.800l-1.350-8.600 3.200 3.500z" stroke="#343a52" stroke-width=".5" stroke-linejoin="round"/><circle cx="7.450" cy="1.100" r="1.100"/><circle cx="13.750" cy="2.300" r="1.050"/><circle cx="1.150" cy="2.300" r="1.050"/></g>
<text x="200.60" y="538.20" font-size="16.3" fill="#343a52" font-weight="bold" text-anchor="start" textLength="149.85" lengthAdjust="spacingAndGlyphs">Affaires par région</text>
<path d="M257.30 603.80A84.4 84.4 0 0 1 306.91 619.92L290.45 642.57A56.4 56.4 0 0 0 257.30 631.80Z" fill="#25608b"/>
<path d="M306.91 619.92A84.4 84.4 0 1 1 257.29 603.80L257.29 631.80A56.4 56.4 0 1 0 290.45 642.57Z" fill="#f3ba62"/>
<line x1="257.30" y1="632.80" x2="257.30" y2="602.80" stroke="#fff" stroke-width="1.9"/>
<line x1="289.86" y1="643.38" x2="307.50" y2="619.11" stroke="#fff" stroke-width="1.9"/>
<text x="244.67" y="695.60" font-size="22.5" fill="#343a52" font-weight="normal" text-anchor="start" textLength="23.85" lengthAdjust="spacingAndGlyphs" stroke="#343a52" stroke-width=".5">10</text>
<line x1="284.10" y1="605.80" x2="294.60" y2="576.40" stroke="#25608b" stroke-width="1.2"/>
<line x1="230.70" y1="771.50" x2="220.80" y2="802.00" stroke="#f3ba62" stroke-width="1.2"/>
<rect x="298.00" y="564.20" width="14.20" height="23.30" fill="#999" rx="2"/>
<text x="301.79" y="580.30" font-size="14" fill="#fff" font-weight="bold" text-anchor="start" textLength="5.48" lengthAdjust="spacingAndGlyphs">1</text>
<rect x="198.30" y="790.00" width="17.30" height="23.30" fill="#999" rx="2"/>
<text x="202.73" y="806.60" font-size="14.3" fill="#fff" font-weight="bold" text-anchor="start" textLength="8.58" lengthAdjust="spacingAndGlyphs">9</text>
<rect x="148.20" y="841.00" width="8.00" height="8.00" fill="#25608b" rx="2"/>
<text x="164.07" y="849.80" font-size="13.2" fill="#7586a3" font-weight="normal" text-anchor="start" textLength="66.04" lengthAdjust="spacingAndGlyphs" stroke="#7586a3" stroke-width="0.6" stroke-linejoin="round">Grand Est</text>
<rect x="254.30" y="841.00" width="8.00" height="8.00" fill="#f3ba62" rx="2"/>
<text x="271.57" y="849.80" font-size="13.2" fill="#7586a3" font-weight="normal" text-anchor="start" textLength="95.43" lengthAdjust="spacingAndGlyphs" stroke="#7586a3" stroke-width="0.6" stroke-linejoin="round">Île-de-France</text>
<rect x="486.00" y="509.00" width="436.20" height="356.00" fill="#fff" rx="7"/>
<rect x="579.80" y="520.10" width="26.70" height="24.80" fill="#edeef3" rx="2.2"/>
<g transform="translate(586.10 527.00)" fill="#343a52"><path d="M7.450 .5l3.100 5.500 3.200-3.500-1.350 8.600a.9.9 0 0 1-.9.800h-8.100a.9.9 0 0 1-.9-.800l-1.350-8.600 3.200 3.500z" stroke="#343a52" stroke-width=".5" stroke-linejoin="round"/><circle cx="7.450" cy="1.100" r="1.100"/><circle cx="13.750" cy="2.300" r="1.050"/><circle cx="1.150" cy="2.300" r="1.050"/></g>
<text x="613.29" y="538.20" font-size="16.3" fill="#343a52" font-weight="bold" text-anchor="start" textLength="216.49" lengthAdjust="spacingAndGlyphs">Affaires perdues / gagnées</text>
<line x1="527.50" y1="563.86" x2="910.30" y2="563.86" stroke="#eef0f4" stroke-width="1"/>
<text x="498.64" y="568.36" font-size="12.6" fill="#c3cad6" font-weight="normal" text-anchor="start" textLength="17.15" lengthAdjust="spacingAndGlyphs" stroke="#c3cad6" stroke-width="0.6" stroke-linejoin="round">80</text>
<line x1="527.50" y1="621.22" x2="910.30" y2="621.22" stroke="#eef0f4" stroke-width="1"/>
<text x="498.52" y="625.72" font-size="12.6" fill="#c3cad6" font-weight="normal" text-anchor="start" textLength="17.27" lengthAdjust="spacingAndGlyphs" stroke="#c3cad6" stroke-width="0.6" stroke-linejoin="round">60</text>
<line x1="527.50" y1="678.58" x2="910.30" y2="678.58" stroke="#eef0f4" stroke-width="1"/>
<text x="497.74" y="683.08" font-size="12.6" fill="#c3cad6" font-weight="normal" text-anchor="start" textLength="18.08" lengthAdjust="spacingAndGlyphs" stroke="#c3cad6" stroke-width="0.6" stroke-linejoin="round">40</text>
<line x1="527.50" y1="735.94" x2="910.30" y2="735.94" stroke="#eef0f4" stroke-width="1"/>
<text x="498.84" y="740.44" font-size="12.6" fill="#c3cad6" font-weight="normal" text-anchor="start" textLength="16.95" lengthAdjust="spacingAndGlyphs" stroke="#c3cad6" stroke-width="0.6" stroke-linejoin="round">20</text>
<line x1="527.50" y1="793.30" x2="910.30" y2="793.30" stroke="#d5dbe6" stroke-width="1.2"/>
<text x="506.29" y="797.80" font-size="12.6" fill="#c3cad6" font-weight="normal" text-anchor="start" textLength="8.71" lengthAdjust="spacingAndGlyphs" stroke="#c3cad6" stroke-width="0.6" stroke-linejoin="round">0</text>
<line x1="591.30" y1="793.30" x2="591.30" y2="800.30" stroke="#e1e5ec" stroke-width="1"/>
<line x1="655.10" y1="793.30" x2="655.10" y2="800.30" stroke="#e1e5ec" stroke-width="1"/>
<line x1="718.90" y1="793.30" x2="718.90" y2="800.30" stroke="#e1e5ec" stroke-width="1"/>
<line x1="782.70" y1="793.30" x2="782.70" y2="800.30" stroke="#e1e5ec" stroke-width="1"/>
<line x1="846.50" y1="793.30" x2="846.50" y2="800.30" stroke="#e1e5ec" stroke-width="1"/>
<rect x="537.00" y="733.65" width="44.80" height="30.97" fill="#f3ba62"/>
<rect x="537.00" y="764.62" width="44.80" height="28.68" fill="#25608b"/>
<text x="534.27" y="819.40" font-size="13.2" fill="#7586a3" font-weight="normal" text-anchor="start" textLength="50.28" lengthAdjust="spacingAndGlyphs" stroke="#7586a3" stroke-width="0.6" stroke-linejoin="round">Janvier</text>
<rect x="600.80" y="710.13" width="44.80" height="40.15" fill="#f3ba62"/>
<rect x="600.80" y="750.28" width="44.80" height="43.02" fill="#25608b"/>
<text x="599.32" y="819.40" font-size="13.2" fill="#7586a3" font-weight="normal" text-anchor="start" textLength="46.78" lengthAdjust="spacingAndGlyphs" stroke="#7586a3" stroke-width="0.6" stroke-linejoin="round">Février</text>
<rect x="664.60" y="775.81" width="44.80" height="6.88" fill="#f3ba62"/>
<rect x="664.60" y="782.69" width="44.80" height="10.61" fill="#25608b"/>
<text x="669.16" y="819.40" font-size="13.2" fill="#7586a3" font-weight="normal" text-anchor="start" textLength="34.96" lengthAdjust="spacingAndGlyphs" stroke="#7586a3" stroke-width="0.6" stroke-linejoin="round">Mars</text>
<rect x="728.40" y="667.11" width="44.80" height="77.44" fill="#f3ba62"/>
<rect x="728.40" y="744.54" width="44.80" height="48.76" fill="#25608b"/>
<text x="736.12" y="819.40" font-size="13.2" fill="#7586a3" font-weight="normal" text-anchor="start" textLength="30.38" lengthAdjust="spacingAndGlyphs" stroke="#7586a3" stroke-width="0.6" stroke-linejoin="round">Avril</text>
<rect x="792.20" y="644.16" width="44.80" height="86.04" fill="#f3ba62"/>
<rect x="792.20" y="730.20" width="44.80" height="63.10" fill="#25608b"/>
<text x="801.20" y="819.40" font-size="13.2" fill="#7586a3" font-weight="normal" text-anchor="start" textLength="26.56" lengthAdjust="spacingAndGlyphs" stroke="#7586a3" stroke-width="0.6" stroke-linejoin="round">Mai</text>
<rect x="856.00" y="612.62" width="44.80" height="94.64" fill="#f3ba62"/>
<rect x="856.00" y="707.26" width="44.80" height="86.04" fill="#25608b"/>
<text x="864.26" y="819.40" font-size="13.2" fill="#7586a3" font-weight="normal" text-anchor="start" textLength="29.06" lengthAdjust="spacingAndGlyphs" stroke="#7586a3" stroke-width="0.6" stroke-linejoin="round">Juin</text>
<rect x="562.00" y="841.00" width="8.00" height="8.00" fill="#25608b" rx="2"/>
<text x="578.97" y="849.80" font-size="13.2" fill="#7586a3" font-weight="normal" text-anchor="start" textLength="110.98" lengthAdjust="spacingAndGlyphs" stroke="#7586a3" stroke-width="0.6" stroke-linejoin="round">Affaires perdues</text>
<rect x="713.50" y="841.00" width="8.00" height="8.00" fill="#f3ba62" rx="2"/>
<text x="729.97" y="849.80" font-size="13.2" fill="#7586a3" font-weight="normal" text-anchor="start" textLength="114.88" lengthAdjust="spacingAndGlyphs" stroke="#7586a3" stroke-width="0.6" stroke-linejoin="round">Affaires gagnées</text>
<rect x="933.30" y="509.00" width="436.10" height="356.00" fill="#fff" rx="7"/>
<rect x="987.80" y="520.10" width="26.70" height="24.80" fill="#edeef3" rx="2.2"/>
<g transform="translate(994.10 527.00)" fill="#343a52"><path d="M7.450 .5l3.100 5.500 3.200-3.500-1.350 8.600a.9.9 0 0 1-.9.800h-8.100a.9.9 0 0 1-.9-.800l-1.350-8.600 3.200 3.500z" stroke="#343a52" stroke-width=".5" stroke-linejoin="round"/><circle cx="7.450" cy="1.100" r="1.100"/><circle cx="13.750" cy="2.300" r="1.050"/><circle cx="1.150" cy="2.300" r="1.050"/></g>
<text x="1022.10" y="538.20" font-size="16.3" fill="#343a52" font-weight="bold" text-anchor="start" textLength="294.31" lengthAdjust="spacingAndGlyphs">Affaires brutes par famille de produit</text>
<text x="947.94" y="570.00" font-size="11.4" fill="#7586a3" font-weight="normal" text-anchor="start" textLength="58.19" lengthAdjust="spacingAndGlyphs" stroke="#7586a3" stroke-width="0.5" stroke-linejoin="round">Réception</text>
<rect x="945.40" y="586.00" width="340.60" height="10.90" fill="#edeef3" rx="2"/>
<rect x="945.40" y="586.00" width="257.00" height="10.90" fill="#25608b" rx="2"/>
<rect x="945.40" y="586.00" width="4.00" height="10.90" fill="#25608b"/>
<text x="1295.08" y="596.00" font-size="13.5" fill="#7586a3" font-weight="bold" text-anchor="start" textLength="56.68" lengthAdjust="spacingAndGlyphs">667,7 k€</text>
<text x="948.41" y="619.10" font-size="11.4" fill="#7586a3" font-weight="normal" text-anchor="start" textLength="58.66" lengthAdjust="spacingAndGlyphs" stroke="#7586a3" stroke-width="0.5" stroke-linejoin="round">Séminaire</text>
<rect x="945.40" y="635.00" width="340.60" height="10.90" fill="#edeef3" rx="2"/>
<rect x="945.40" y="635.00" width="340.60" height="10.90" fill="#25608b" rx="2"/>
<rect x="945.40" y="635.00" width="4.00" height="10.90" fill="#25608b"/>
<text x="1292.33" y="645.00" font-size="13.5" fill="#7586a3" font-weight="bold" text-anchor="start" textLength="59.44" lengthAdjust="spacingAndGlyphs">882,4 k€</text>
<text x="948.71" y="668.40" font-size="11.4" fill="#7586a3" font-weight="normal" text-anchor="start" textLength="82.15" lengthAdjust="spacingAndGlyphs" stroke="#7586a3" stroke-width="0.5" stroke-linejoin="round">Team building</text>
<rect x="945.40" y="684.00" width="340.60" height="10.90" fill="#edeef3" rx="2"/>
<rect x="945.40" y="684.00" width="76.60" height="10.90" fill="#25608b" rx="2"/>
<rect x="945.40" y="684.00" width="4.00" height="10.90" fill="#25608b"/>
<text x="1295.91" y="694.00" font-size="13.5" fill="#7586a3" font-weight="bold" text-anchor="start" textLength="55.84" lengthAdjust="spacingAndGlyphs">200,1 k€</text>
<line x1="945.40" y1="828.00" x2="1358.20" y2="828.00" stroke="#eef0f4" stroke-width="1.2"/>
<rect x="1116.70" y="840.70" width="8.00" height="8.00" fill="#25608b" rx="2"/>
<text x="1129.28" y="848.80" font-size="13.2" fill="#7586a3" font-weight="normal" text-anchor="start" textLength="58.14" lengthAdjust="spacingAndGlyphs" stroke="#7586a3" stroke-width="0.6" stroke-linejoin="round">Montant</text>
<rect x="1380.60" y="509.00" width="435.70" height="536.00" fill="#fff" rx="7"/>
<text x="1525.58" y="537.00" font-size="16.3" fill="#d9dbe2" font-weight="bold" text-anchor="start" textLength="145.41" lengthAdjust="spacingAndGlyphs">Détail des affaires</text>
<g fill="none" stroke="#444" stroke-width="1"><circle cx="1598.700" cy="842.800" r="9.400"/><circle cx="1598" cy="842.200" r="3.300" stroke-width="1.200"/><path d="M1600.400 844.700l2.400 2.400" stroke-width="1.200"/></g>
<text x="1479.12" y="878.70" font-size="15.6" fill="#404040" font-weight="normal" text-anchor="start" textLength="239.06" lengthAdjust="spacingAndGlyphs">Cliquez sur le rapport principal</text>
<text x="1530.86" y="902.00" font-size="15.6" fill="#404040" font-weight="normal" text-anchor="start" textLength="135.62" lengthAdjust="spacingAndGlyphs">pour voir le détail</text>
<rect x="40.00" y="876.60" width="436.20" height="168.40" fill="#fff" rx="7"/>
<rect x="72.40" y="888.00" width="26.70" height="24.80" fill="#edeef3" rx="2.2"/>
<g transform="translate(78.70 894.90)" fill="#343a52"><path d="M7.450 .5l3.100 5.500 3.200-3.500-1.350 8.600a.9.9 0 0 1-.9.800h-8.100a.9.9 0 0 1-.9-.800l-1.350-8.600 3.200 3.500z" stroke="#343a52" stroke-width=".5" stroke-linejoin="round"/><circle cx="7.450" cy="1.100" r="1.100"/><circle cx="13.750" cy="2.300" r="1.050"/><circle cx="1.150" cy="2.300" r="1.050"/></g>
<text x="106.69" y="905.50" font-size="16.3" fill="#343a52" font-weight="bold" text-anchor="start" textLength="337.28" lengthAdjust="spacingAndGlyphs">Affaires du mois ouvertes par commercial</text>
<line x1="72.40" y1="931.60" x2="464.10" y2="931.60" stroke="#eef0f4" stroke-width="1"/>
<text x="51.96" y="936.10" font-size="12.6" fill="#c3cad6" font-weight="normal" text-anchor="start" textLength="8.48" lengthAdjust="spacingAndGlyphs" stroke="#c3cad6" stroke-width="0.6" stroke-linejoin="round">4</text>
<line x1="72.40" y1="982.40" x2="464.10" y2="982.40" stroke="#eef0f4" stroke-width="1"/>
<text x="52.66" y="986.90" font-size="12.6" fill="#c3cad6" font-weight="normal" text-anchor="start" textLength="7.96" lengthAdjust="spacingAndGlyphs" stroke="#c3cad6" stroke-width="0.6" stroke-linejoin="round">3</text>
<line x1="72.40" y1="1033.20" x2="464.10" y2="1033.20" stroke="#eef0f4" stroke-width="1"/>
<text x="52.45" y="1037.70" font-size="12.6" fill="#c3cad6" font-weight="normal" text-anchor="start" textLength="8.29" lengthAdjust="spacingAndGlyphs" stroke="#c3cad6" stroke-width="0.6" stroke-linejoin="round">2</text>
<rect x="92.18" y="982.40" width="91.00" height="57.60" fill="#25608b"/>
<rect x="222.75" y="931.60" width="91.00" height="108.40" fill="#25608b"/>
<rect x="353.32" y="982.40" width="91.00" height="57.60" fill="#25608b"/>
<rect x="486.00" y="876.60" width="436.20" height="168.40" fill="#fff" rx="7"/>
<rect x="524.20" y="888.00" width="26.70" height="24.80" fill="#edeef3" rx="2.2"/>
<g transform="translate(530.50 894.90)" fill="#343a52"><path d="M7.450 .5l3.100 5.500 3.200-3.500-1.350 8.600a.9.9 0 0 1-.9.800h-8.100a.9.9 0 0 1-.9-.800l-1.350-8.600 3.200 3.500z" stroke="#343a52" stroke-width=".5" stroke-linejoin="round"/><circle cx="7.450" cy="1.100" r="1.100"/><circle cx="13.750" cy="2.300" r="1.050"/><circle cx="1.150" cy="2.300" r="1.050"/></g>
<text x="558.30" y="905.50" font-size="16.3" fill="#343a52" font-weight="bold" text-anchor="start" textLength="327.28" lengthAdjust="spacingAndGlyphs">Affaires du mois ouvertes par probabilité</text>
<line x1="518.40" y1="931.60" x2="910.10" y2="931.60" stroke="#eef0f4" stroke-width="1"/>
<text x="497.96" y="936.10" font-size="12.6" fill="#c3cad6" font-weight="normal" text-anchor="start" textLength="8.48" lengthAdjust="spacingAndGlyphs" stroke="#c3cad6" stroke-width="0.6" stroke-linejoin="round">4</text>
<line x1="518.40" y1="982.40" x2="910.10" y2="982.40" stroke="#eef0f4" stroke-width="1"/>
<text x="498.66" y="986.90" font-size="12.6" fill="#c3cad6" font-weight="normal" text-anchor="start" textLength="7.96" lengthAdjust="spacingAndGlyphs" stroke="#c3cad6" stroke-width="0.6" stroke-linejoin="round">3</text>
<line x1="518.40" y1="1033.20" x2="910.10" y2="1033.20" stroke="#eef0f4" stroke-width="1"/>
<text x="498.45" y="1037.70" font-size="12.6" fill="#c3cad6" font-weight="normal" text-anchor="start" textLength="8.29" lengthAdjust="spacingAndGlyphs" stroke="#c3cad6" stroke-width="0.6" stroke-linejoin="round">2</text>
<rect x="538.18" y="982.40" width="91.00" height="57.60" fill="#f3ba62"/>
<rect x="668.75" y="931.60" width="91.00" height="108.40" fill="#f3ba62"/>
<rect x="799.32" y="982.40" width="91.00" height="57.60" fill="#f3ba62"/>
<rect x="933.30" y="876.60" width="436.10" height="168.40" fill="#fff" rx="7"/>
<rect x="989.00" y="888.00" width="26.70" height="24.80" fill="#edeef3" rx="2.2"/>
<g transform="translate(995.30 894.90)" fill="#343a52"><path d="M7.450 .5l3.100 5.500 3.200-3.500-1.350 8.600a.9.9 0 0 1-.9.800h-8.100a.9.9 0 0 1-.9-.800l-1.350-8.600 3.200 3.500z" stroke="#343a52" stroke-width=".5" stroke-linejoin="round"/><circle cx="7.450" cy="1.100" r="1.100"/><circle cx="13.750" cy="2.300" r="1.050"/><circle cx="1.150" cy="2.300" r="1.050"/></g>
<text x="1023.59" y="905.50" font-size="16.3" fill="#343a52" font-weight="bold" text-anchor="start" textLength="292.60" lengthAdjust="spacingAndGlyphs">Affaires net du mois par commercial</text>
<line x1="1018.00" y1="931.30" x2="1358.20" y2="931.30" stroke="#eef0f4" stroke-width="1"/>
<text x="962.22" y="935.80" font-size="12.6" fill="#c3cad6" font-weight="normal" text-anchor="start" textLength="43.28" lengthAdjust="spacingAndGlyphs" stroke="#c3cad6" stroke-width="0.6" stroke-linejoin="round">1,0 M€</text>
<line x1="1018.00" y1="972.30" x2="1358.20" y2="972.30" stroke="#eef0f4" stroke-width="1"/>
<text x="945.63" y="976.80" font-size="12.6" fill="#c3cad6" font-weight="normal" text-anchor="start" textLength="59.90" lengthAdjust="spacingAndGlyphs" stroke="#c3cad6" stroke-width="0.6" stroke-linejoin="round">800,0 k€</text>
<line x1="1018.00" y1="1013.20" x2="1358.20" y2="1013.20" stroke="#eef0f4" stroke-width="1"/>
<text x="945.52" y="1017.70" font-size="12.6" fill="#c3cad6" font-weight="normal" text-anchor="start" textLength="60.01" lengthAdjust="spacingAndGlyphs" stroke="#c3cad6" stroke-width="0.6" stroke-linejoin="round">600,0 k€</text>
<rect x="1261.40" y="957.00" width="78.80" height="90.00" fill="#25608b"/>
</svg>
</body></html>
